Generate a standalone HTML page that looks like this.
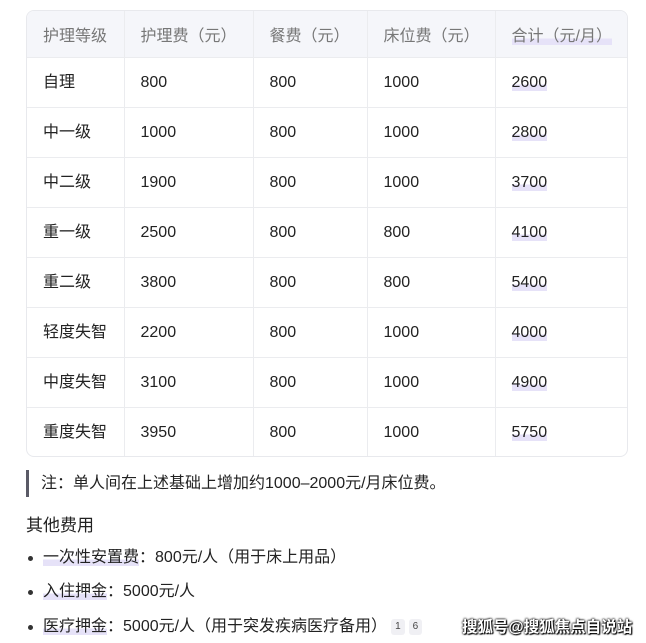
<!DOCTYPE html>
<html><head><meta charset="utf-8"><style>
*{margin:0;padding:0;box-sizing:border-box}
body{width:646px;height:643px;background:#fff;font-family:"Liberation Sans","Noto Sans CJK SC",sans-serif;color:#222;font-size:16px;position:relative;overflow:hidden}
.tbl{position:absolute;left:26px;top:10px;width:602px;border:1px solid #e8e9ed;border-radius:8px;overflow:hidden}
table{border-collapse:collapse;width:100%}
td,th{height:50px;padding:0 0 0 16px;text-align:left;font-weight:normal;border-right:1px solid #ebecef;border-bottom:1px solid #ebecef;white-space:nowrap}
td{vertical-align:baseline;padding-top:14px;line-height:22px}
th{height:46px;background:#f5f6fa;color:#777}
tr td:last-child,tr th:last-child{border-right:none}
tr:last-child td{border-bottom:none;height:49px}
.hl{background:linear-gradient(transparent 62%,#e6e2f8 62%)}
.q{position:absolute;left:26px;top:470px;height:27px;border-left:3px solid #5a5a66;padding-left:12px;line-height:27px}
.h{position:absolute;left:26px;top:511px;font-size:17px}
.li{position:absolute;left:43px;line-height:22px}
.li:before{content:"";position:absolute;left:-15px;top:9px;width:5px;height:5px;border-radius:50%;background:#333}
.s{display:inline-block;font-size:10px;background:#f0f0f4;color:#444;padding:0 4px;border-radius:3px;margin-left:4px;line-height:16px;vertical-align:middle}
.wm{position:absolute;left:462px;top:615px;font-size:15.5px;font-weight:bold;color:#fff;text-shadow:0 0 2px #000,0 0 2px #000,1px 1px 1px #000}
</style></head><body>
<div class="tbl"><table>
<tr><th style="width:97px">护理等级</th><th style="width:129px">护理费（元）</th><th style="width:114px">餐费（元）</th><th style="width:128px">床位费（元）</th><th><span class="hl">合计（元/月）</span></th></tr>
<tr><td>自理</td><td>800</td><td>800</td><td>1000</td><td><span class="hl">2600</span></td></tr>
<tr><td>中一级</td><td>1000</td><td>800</td><td>1000</td><td><span class="hl">2800</span></td></tr>
<tr><td>中二级</td><td>1900</td><td>800</td><td>1000</td><td><span class="hl">3700</span></td></tr>
<tr><td>重一级</td><td>2500</td><td>800</td><td>800</td><td><span class="hl">4100</span></td></tr>
<tr><td>重二级</td><td>3800</td><td>800</td><td>800</td><td><span class="hl">5400</span></td></tr>
<tr><td>轻度失智</td><td>2200</td><td>800</td><td>1000</td><td><span class="hl">4000</span></td></tr>
<tr><td>中度失智</td><td>3100</td><td>800</td><td>1000</td><td><span class="hl">4900</span></td></tr>
<tr><td>重度失智</td><td>3950</td><td>800</td><td>1000</td><td><span class="hl">5750</span></td></tr>
</table></div>
<div class="q">注：单人间在上述基础上增加约1000–2000元/月床位费。</div>
<div class="h">其他费用</div>
<div class="li" style="top:547px"><span class="hl">一次性安置费</span>：800元/人（用于床上用品）</div>
<div class="li" style="top:581px"><span class="hl">入住押金</span>：5000元/人</div>
<div class="li" style="top:616px"><span class="hl">医疗押金</span>：5000元/人（用于突发疾病医疗备用）<span class="s">1</span><span class="s">6</span></div>
<div class="wm">搜狐号@搜狐焦点自说站</div>
</body></html>
